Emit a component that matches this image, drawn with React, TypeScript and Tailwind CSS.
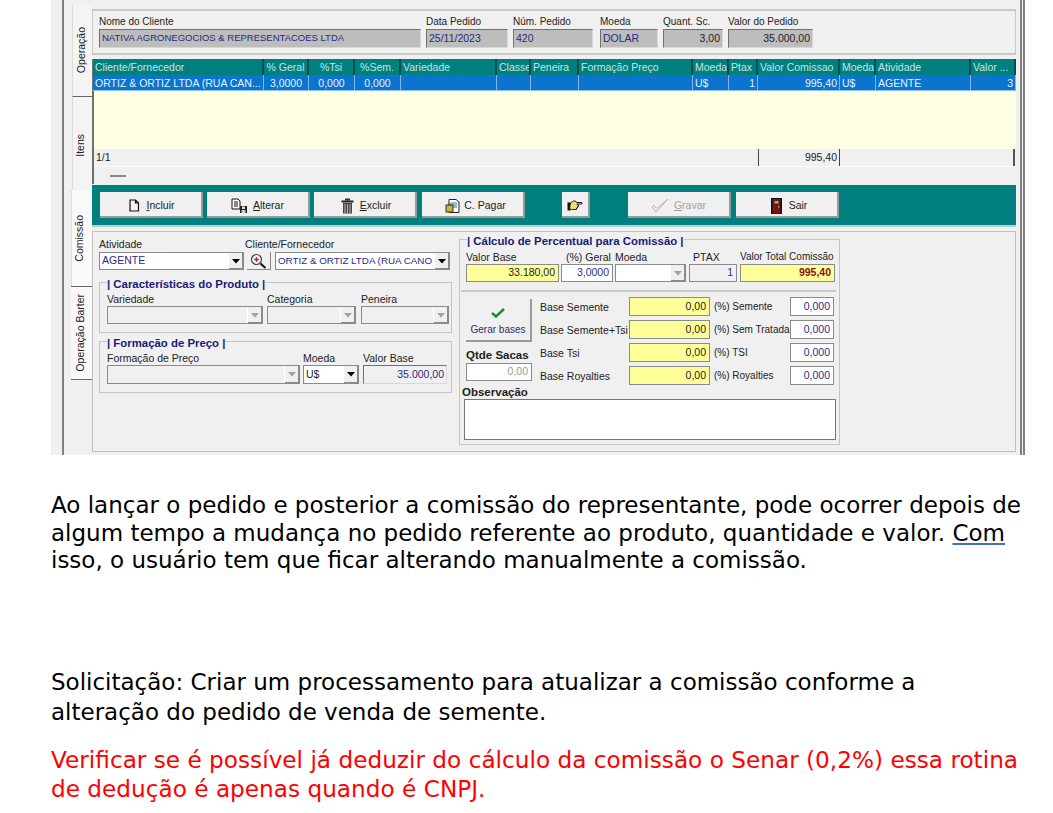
import React from "react";

const columns = [
  { title: "Cliente/Fornecedor", value: "ORTIZ & ORTIZ LTDA (RUA CAN...", align: "text-left" },
  { title: "% Geral", value: "3,0000", align: "text-center" },
  { title: "%Tsi", value: "0,000", align: "text-center" },
  { title: "%Sem.", value: "0,000", align: "text-center" },
  { title: "Variedade", value: "", align: "text-left" },
  { title: "Classe", value: "", align: "text-left" },
  { title: "Peneira", value: "", align: "text-left" },
  { title: "Formação Preço", value: "", align: "text-left" },
  { title: "Moeda", value: "U$", align: "text-left" },
  { title: "Ptax", value: "1", align: "text-right" },
  { title: "Valor Comissao", value: "995,40", align: "text-right" },
  { title: "Moeda", value: "U$", align: "text-left" },
  { title: "Atividade", value: "AGENTE", align: "text-left" },
  { title: "Valor ...", value: "3", align: "text-right" },
];

const gridCols =
  "grid grid-cols-[171px_45px_46px_46px_96px_34px_48px_114px_36px_29px_82px_36px_95px_45px]";

function Label({ className = "", children }: { className?: string; children: React.ReactNode }) {
  return <div className={"h-[14px] whitespace-nowrap text-[10.5px] leading-[14px] text-[#222] " + className}>{children}</div>;
}

function ReadOnly({ className = "", children, right }: { className?: string; children?: React.ReactNode; right?: boolean }) {
  return (
    <div
      className={
        "flex h-[19px] items-center whitespace-nowrap border border-t-[#707070] border-l-[#707070] border-r-[#d8d8d8] border-b-[#d8d8d8] bg-[#bdbdbd] px-[2px] text-[10.5px] text-[#2a2a80] " +
        (right ? "justify-end " : "") +
        className
      }
    >
      {children}
    </div>
  );
}

function Input({ className = "", children }: { className?: string; children?: React.ReactNode }) {
  return (
    <div
      className={
        "flex items-center justify-end whitespace-nowrap border border-[#8a8a8a] px-[3px] text-[10.5px] " + className
      }
    >
      {children}
    </div>
  );
}

function Arrow({ disabled }: { disabled?: boolean }) {
  return (
    <div className="flex h-full w-[15px] shrink-0 items-center justify-center border-l border-[#fff] bg-[#f0f0f0] shadow-[inset_-1px_-1px_0_#8a8a8a]">
      <svg width="8" height="5" viewBox="0 0 8 5">
        <path d="M0 0h8L4 4.5z" fill={disabled ? "#a0a0a0" : "#000"} />
      </svg>
    </div>
  );
}

function Combo({ className = "", value, disabled }: { className?: string; value?: string; disabled?: boolean }) {
  return (
    <div
      className={
        "flex h-[18px] items-center overflow-hidden border border-[#8a8a8a] text-[10.5px] text-[#2a2a90] " +
        (disabled ? "bg-[#f0f0f0] " : "bg-white ") +
        className
      }
    >
      <div className="min-w-0 flex-1 overflow-hidden whitespace-nowrap pl-[2px]">{value}</div>
      <Arrow disabled={disabled} />
    </div>
  );
}

function Group({ title, className = "", children }: { title: string; className?: string; children: React.ReactNode }) {
  return (
    <fieldset className={"border border-[#c4c4c4] " + className}>
      <legend className="ml-[7px] whitespace-nowrap pt-[4px] text-[11.4px] font-bold leading-[12px] text-[#1a1a7a]">{title}</legend>
      {children}
    </fieldset>
  );
}

function ActionButton({
  className = "",
  icon,
  label,
  disabled,
}: {
  className?: string;
  icon?: React.ReactNode;
  label?: React.ReactNode;
  disabled?: boolean;
}) {
  return (
    <div
      className={
        "flex h-[26px] items-center justify-center border-b-2 border-r-2 border-[#9a9a9a] bg-[#f0f0f0] pt-[3px] text-[10.5px] " +
        (disabled ? "text-[#a0a0a0] " : "text-[#222] ") +
        className
      }
    >
      {icon}
      {label}
    </div>
  );
}

function VerticalTab({ label, className = "" }: { label: string; className?: string }) {
  return (
    <div className={"flex items-center justify-center " + className}>
      <span className="rotate-180 whitespace-nowrap text-[10.5px] text-[#222] [writing-mode:vertical-rl]">{label}</span>
    </div>
  );
}

function IconDoc() {
  return (
    <svg width="11" height="13" viewBox="0 0 11 13" fill="none" stroke="#111" strokeWidth="1.2">
      <path d="M1 1h5.5l3 3v8H1zM6.5 1v3h3" />
    </svg>
  );
}

function IconSave() {
  return (
    <svg width="17" height="16" viewBox="0 0 17 16">
      <path d="M1 1h6l2 2v8H1z" fill="#fff" stroke="#111" />
      <path d="M3 4h4M3 6h4M3 8h4" stroke="#111" />
      <rect x="9" y="8" width="7" height="7" fill="#222" />
      <rect x="11" y="8.5" width="3" height="2.5" fill="#ddd" />
      <rect x="10.5" y="12" width="4" height="3" fill="#ccc" />
    </svg>
  );
}

function IconTrash() {
  return (
    <svg width="13" height="16" viewBox="0 0 13 16">
      <rect x="4" y="0.5" width="5" height="2" fill="#333" />
      <rect x="0.5" y="2.5" width="12" height="2" fill="#222" />
      <rect x="2" y="5" width="9" height="10.5" fill="#444" />
      <path d="M4 6v9M6.5 6v9M9 6v9" stroke="#bbb" />
    </svg>
  );
}

function IconClipboard() {
  return (
    <svg width="16" height="16" viewBox="0 0 16 16">
      <path d="M4 1.5h7l3 2.5v10.5H4z" fill="#fff" stroke="#222" />
      <path d="M6 5h6M6 7h6M6 9h6" stroke="#3a6ab0" />
      <rect x="1" y="7" width="7" height="7" fill="#c9b53a" stroke="#333" />
      <rect x="3" y="5.5" width="3" height="2" fill="#555" />
    </svg>
  );
}

function IconHand() {
  return (
    <svg width="16" height="12" viewBox="0 0 16 12">
      <path d="M0.5 2.5h3v8h-3z" fill="#111" />
      <path d="M3.5 3l3-2h2l1 1.5h5.5v1.5h-5l0.5 1h1v1.5h-1v1.5h-1v1.5h-5l-2-1z" fill="#f0e070" stroke="#111" strokeWidth="0.9" />
    </svg>
  );
}

function IconFadedCheck() {
  return (
    <svg width="18" height="16" viewBox="0 0 18 16" fill="none" stroke="#b4b4b4">
      <path d="M1 9l4 5L17 1 5.5 10.5 3 7.5z" />
    </svg>
  );
}

function IconDoor() {
  return (
    <svg width="11" height="16" viewBox="0 0 11 16">
      <rect x="0" y="0" width="11" height="16" fill="#111" />
      <rect x="1.5" y="1" width="8" height="14.5" fill="#7a1218" />
      <rect x="3.5" y="3" width="4" height="2.5" fill="#49c5c5" />
      <rect x="7" y="8" width="1.2" height="1.5" fill="#e0c040" />
    </svg>
  );
}

function IconZoom() {
  return (
    <svg width="17" height="16" viewBox="0 0 17 16">
      <circle cx="6.5" cy="6.5" r="5" fill="#f4f4f4" stroke="#444" strokeWidth="1.2" />
      <path d="M4.2 6.5h4.6M6.5 4.2v4.6" stroke="#d01030" strokeWidth="1.4" />
      <path d="M10.5 10.5l5 4.5" stroke="#111" strokeWidth="2" />
    </svg>
  );
}

const baseRows = [
  { base: "Base Semente", pct: "(%) Semente" },
  { base: "Base Semente+Tsi", pct: "(%) Sem Tratada" },
  { base: "Base Tsi", pct: "(%) TSI" },
  { base: "Base Royalties", pct: "(%) Royalties" },
];

const topLabel = "!text-[10px] !leading-[13px]";

function Screenshot() {
  return (
    <div className="ml-[51px] flex h-[455px] w-[974px] overflow-hidden border-r-[5px] border-double border-[#808080] bg-[#f0f0f0]">
      <div className="w-[13px] shrink-0 border-r-2 border-[#808080]" />

      {/* abas verticais */}
      <div className="flex w-[28px] shrink-0 flex-col items-end pt-[5px]">
        <VerticalTab label="Operação" className="h-[91px] w-[20px] border-l border-[#dcdcdc] bg-[#f4f4f4] pr-[2px]" />
        <VerticalTab label="Itens" className="h-[94px] w-[20px] border-l border-t border-l-[#dcdcdc] border-t-[#666] bg-[#f4f4f4] pr-[3px] pt-[4px]" />
        <VerticalTab label="Comissão" className="h-[96px] w-[21px] border-l border-[#dcdcdc] bg-[#fafafa] pr-[5px]" />
        <VerticalTab label="Operação Barter" className="h-[94px] w-[21px] border-y border-y-[#666] bg-[#f9f9f9] pr-[2px]" />
      </div>

      <div className="w-[924px] shrink-0 pt-[9px]">
        {/* cabeçalho do pedido */}
        <div className="flex h-[46px] gap-[5px] border-y-2 border-y-[#c9c9c9] border-r border-r-[#c9c9c9] border-l border-l-[#c9c9c9] pl-[6px] pt-[4px]">
          <div>
            <Label className={topLabel}>Nome do Cliente</Label>
            <ReadOnly className="w-[322px] !text-[9.5px]">NATIVA AGRONEGOCIOS &amp; REPRESENTACOES LTDA</ReadOnly>
          </div>
          <div>
            <Label className={topLabel}>Data Pedido</Label>
            <ReadOnly className="w-[82px]">25/11/2023</ReadOnly>
          </div>
          <div>
            <Label className={topLabel}>Núm. Pedido</Label>
            <ReadOnly className="w-[80px]">420</ReadOnly>
          </div>
          <div className="ml-[2px]">
            <Label className={topLabel}>Moeda</Label>
            <ReadOnly className="w-[58px]">DOLAR</ReadOnly>
          </div>
          <div>
            <Label className={topLabel}>Quant. Sc.</Label>
            <ReadOnly className="w-[60px] !text-[#222]" right>
              3,00
            </ReadOnly>
          </div>
          <div>
            <Label className={topLabel}>Valor do Pedido</Label>
            <ReadOnly className="w-[85px] !text-[#222]" right>
              35.000,00
            </ReadOnly>
          </div>
        </div>

        {/* grade de comissões */}
        <div className="mt-[4px] border-l-2 border-[#707070]">
          <div className={gridCols + " -ml-px h-[16px] bg-[#007f7f]"}>
            {columns.map((c, i) => (
              <div
                key={i}
                className={
                  "overflow-hidden whitespace-nowrap border-r-2 border-[#004f4f] px-[2px] text-[10.5px] leading-[16px] text-[#c4e6e6] " +
                  (i >= 1 && i <= 3 ? "text-center" : "text-left")
                }
              >
                {c.title}
              </div>
            ))}
          </div>
          <div className={gridCols + " -ml-px h-[16px] border-b border-[#8fc4ee] bg-[#0a74cf]"}>
            {columns.map((c, i) => (
              <div key={i} className={"overflow-hidden whitespace-nowrap border-r border-[#7fb8e8] px-[2px] text-[10.5px] leading-[17px] text-[#e6f2fb] " + c.align}>
                {c.value}
              </div>
            ))}
          </div>
          <div className="h-[58px] bg-[#ffffe3]" />
          <div className="flex h-[18px] border-b border-white text-[10.5px] leading-[17px] text-[#222]">
            <div className="w-[664px] pl-[2px]">1/1</div>
            <div className="w-[82px] border-x border-[#444] pr-[2px] text-right">995,40</div>
            <div className="w-[175px] border-r-2 border-[#555]" />
          </div>
          <div className="flex h-[17px] items-center pl-[16px]">
            <div className="h-[2px] w-[16px] bg-[#888]" />
          </div>
        </div>

        {/* barra de botões */}
        <div className="mt-[1px] flex h-[42px] items-center border-b-2 border-[#b8d0d0] bg-[#007f7f] pl-[8px]">
          <ActionButton className="w-[103px] gap-[6px] pl-[3px]" icon={<IconDoc />} label={<span><u>I</u>ncluir</span>} />
          <ActionButton className="ml-[4px] w-[103px] gap-[5px]" icon={<IconSave />} label={<span><u>A</u>lterar</span>} />
          <ActionButton className="ml-[4px] w-[103px] gap-[6px] pl-[3px]" icon={<IconTrash />} label={<span><u>E</u>xcluir</span>} />
          <ActionButton className="ml-[5px] w-[103px] gap-[3px] pl-[6px]" icon={<IconClipboard />} label="C. Pagar" />
          <ActionButton className="ml-[37px] w-[28px]" icon={<IconHand />} />
          <ActionButton className="ml-[38px] w-[103px] gap-[5px]" icon={<IconFadedCheck />} label={<span><u>G</u>ravar</span>} disabled />
          <ActionButton className="ml-[5px] w-[103px] gap-[5px] pl-[5px]" icon={<IconDoor />} label={<span className="ml-[2px]">Sair</span>} />
        </div>

        {/* painel de comissão */}
        <div className="mt-[4px] flex h-[221px] border border-[#c0c0c0] pl-[6px]">
          <div className="w-[354px] shrink-0">
            <div className="flex pt-[6px]">
              <div className="w-[146px]">
                <Label className="!leading-[12px]">Atividade</Label>
                <Combo className="w-[145px]" value="AGENTE" />
              </div>
              <div>
                <Label className="!leading-[12px]">Cliente/Fornecedor</Label>
                <div className="flex">
                  <div className="ml-[2px] flex h-[18px] w-[24px] items-center justify-center border-b border-r border-[#888] bg-[#f0f0f0]">
                    <IconZoom />
                  </div>
                  <Combo className="ml-[4px] w-[175px] !text-[9.8px]" value="ORTIZ & ORTIZ LTDA (RUA CANO" />
                </div>
              </div>
            </div>

            <Group title="| Características do Produto |" className="mt-[4px] h-[59px] w-[353px]">
              <div className="flex gap-[4px] pl-[7px] pt-[2px]">
                <div>
                  <Label>Variedade</Label>
                  <Combo className="w-[156px]" disabled />
                </div>
                <div>
                  <Label>Categoria</Label>
                  <Combo className="w-[89px]" disabled />
                </div>
                <div className="ml-px">
                  <Label>Peneira</Label>
                  <Combo className="w-[88px]" disabled />
                </div>
              </div>
            </Group>

            <Group title="| Formação de Preço |" className="h-[60px] w-[353px]">
              <div className="flex gap-[3px] pl-[7px] pt-[2px]">
                <div>
                  <Label>Formação de Preço</Label>
                  <Combo className="w-[193px] !h-[19px]" disabled />
                </div>
                <div>
                  <Label>Moeda</Label>
                  <Combo className="w-[56px] !h-[19px] !text-[#222]" value="U$" />
                </div>
                <div className="ml-px">
                  <Label>Valor Base</Label>
                  <ReadOnly className="w-[84px] !bg-[#f0f0f0]" right>
                    35.000,00
                  </ReadOnly>
                </div>
              </div>
            </Group>
          </div>

          <Group title="| Cálculo de Percentual para Comissão |" className="ml-[6px] -mt-px h-[214px] w-[381px]">
            <div className="flex gap-[2px] pl-[6px] pt-[3px]">
              <div>
                <Label>Valor Base</Label>
                <Input className="h-[18px] w-[93px] bg-[#ffff99] text-[#222]">33.180,00</Input>
              </div>
              <div>
                <Label className="pl-[5px]">(%) Geral</Label>
                <Input className="h-[18px] w-[52px] bg-white text-[#2a2a90]">3,0000</Input>
              </div>
              <div>
                <Label>Moeda</Label>
                <Combo className="w-[71px] !bg-white" disabled />
              </div>
              <div className="ml-px">
                <Label className="pl-[4px]">PTAX</Label>
                <Input className="h-[18px] w-[48px] bg-[#f0f0f0] text-[#2a2a90]">1</Input>
              </div>
              <div className="ml-px">
                <Label className="!text-[10px]">Valor Total Comissão</Label>
                <Input className="h-[18px] w-[95px] bg-[#ffff99] font-bold text-[#8a1010]">995,40</Input>
              </div>
            </div>
            <div className="mx-[1px] mt-[8px] h-[2px] w-[375px] bg-[#c8c8c8]" />

            <div className="flex pl-[6px] pt-[5px]">
              <div className="w-[74px] shrink-0 pt-[2px]">
                <div className="flex h-[43px] w-[66px] flex-col items-center justify-center gap-[4px] border-b-2 border-r-2 border-[#9a9a9a] bg-[#f0f0f0] pt-[6px] text-[10px] text-[#2a2a80]">
                  <svg width="14" height="10" viewBox="0 0 14 10" fill="none" stroke="#1c8a2e" strokeWidth="2.4">
                    <path d="M1 5l4 3.5L13 1" />
                  </svg>
                  Gerar bases
                </div>
                <div className="mt-[5px] whitespace-nowrap text-[11.5px] font-bold leading-[16px] text-[#222]">Qtde Sacas</div>
                <Input className="h-[18px] w-[66px] bg-white text-[#999]">0,00</Input>
              </div>
              <div className="flex flex-col gap-[4px]">
                {baseRows.map((row) => (
                  <div key={row.base} className="flex h-[19px] items-center">
                    <Label className="w-[89px]">{row.base}</Label>
                    <Input className="h-[19px] w-[81px] bg-[#ffff99] text-[#222]">0,00</Input>
                    <Label className="ml-[4px] w-[76px] !text-[10px]">{row.pct}</Label>
                    <Input className="h-[19px] w-[44px] bg-white text-[#2a2a90]">0,000</Input>
                  </div>
                ))}
              </div>
            </div>
            <div className="pl-[2px] text-[11.5px] font-bold leading-[14px] text-[#222]">Observação</div>
            <div className="ml-[4px] h-[41px] w-[372px] border border-[#777] bg-white" />
          </Group>
        </div>
      </div>
    </div>
  );
}

export default function App() {
  return (
    <div className="h-[813px] w-[1053px] overflow-hidden bg-white font-['DejaVu_Sans',sans-serif] text-[23px] text-black">
      <div className="font-['Liberation_Sans',sans-serif]">
        <Screenshot />
      </div>
      <div className="ml-[51px] w-[975px]">
        <p className="mt-[37px] leading-[27.5px]">
          Ao lançar o pedido e posterior a comissão do representante, pode ocorrer depois de algum tempo a mudança no
          pedido referente ao produto, quantidade e valor.{" "}
          <span className="underline decoration-[#3f74b8] decoration-2 underline-offset-2">Com</span> isso, o usuário tem
          que ficar alterando manualmente a comissão.
        </p>
        <p className="mt-[92px] leading-[30px]">
          Solicitação: Criar um processamento para atualizar a comissão conforme a alteração do pedido de venda de
          semente.
        </p>
        <p className="mt-[18px] text-[23.2px] leading-[29.5px] text-[#ff0000]">
          Verificar se é possível já deduzir do cálculo da comissão o Senar (0,2%) essa rotina de dedução é apenas quando
          é CNPJ.
        </p>
      </div>
    </div>
  );
}
